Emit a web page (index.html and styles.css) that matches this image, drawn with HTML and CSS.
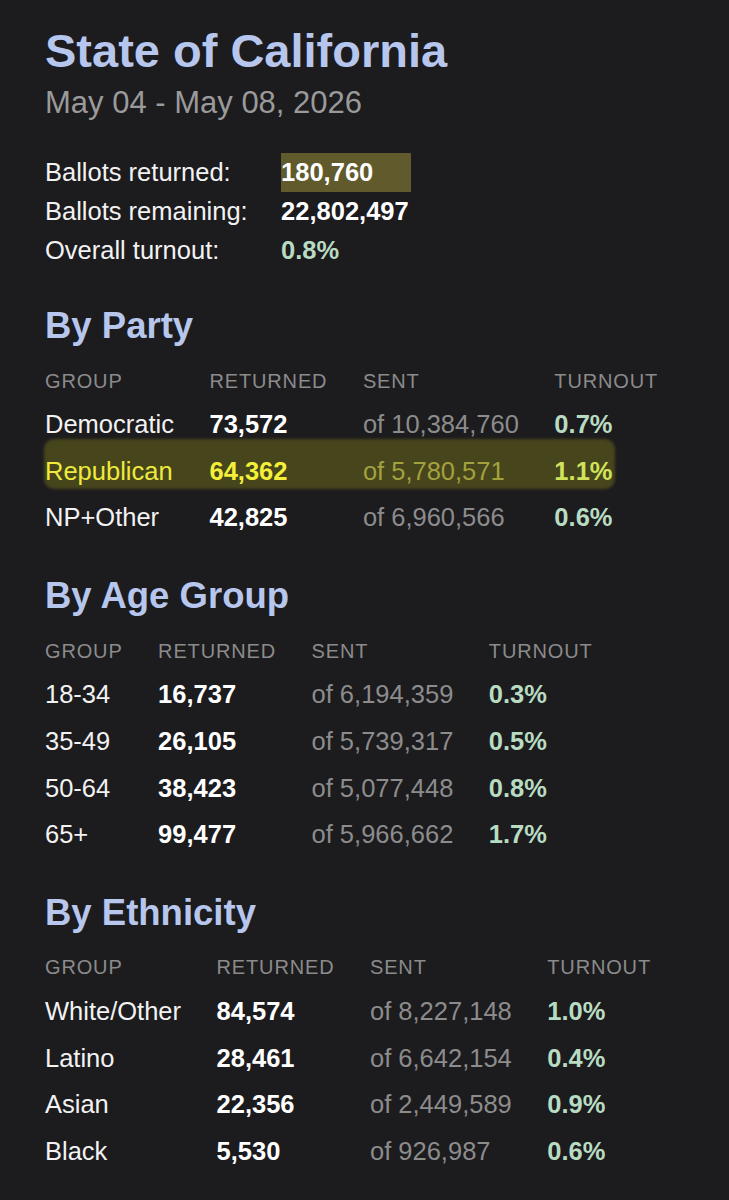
FILE: index.html
```html
<!DOCTYPE html>
<html lang="en">
<head>
<meta charset="utf-8">
<title>State of California</title>
<link rel="stylesheet" href="styles.css">
</head>
<body>
<main class="page">
  <h1 class="title">State of California</h1>
  <p class="dates">May 04 - May 08, 2026</p>

  <dl class="stats">
    <dt>Ballots returned:</dt><dd class="val marked-cell">180,760</dd>
    <dt>Ballots remaining:</dt><dd class="val">22,802,497</dd>
    <dt>Overall turnout:</dt><dd class="val pct">0.8%</dd>
  </dl>

  <section class="group">
    <h2>By Party</h2>
    <div class="tbl">
      <div class="row head"><span>GROUP</span><span>RETURNED</span><span>SENT</span><span>TURNOUT</span></div>
      <div class="row"><span class="name">Democratic</span><span class="num">73,572</span><span class="of">of 10,384,760</span><span class="pct">0.7%</span></div>
      <div class="row marked"><span class="name">Republican</span><span class="num">64,362</span><span class="of">of 5,780,571</span><span class="pct">1.1%</span></div>
      <div class="row"><span class="name">NP+Other</span><span class="num">42,825</span><span class="of">of 6,960,566</span><span class="pct">0.6%</span></div>
    </div>
  </section>

  <section class="group">
    <h2>By Age Group</h2>
    <div class="tbl">
      <div class="row head"><span>GROUP</span><span>RETURNED</span><span>SENT</span><span>TURNOUT</span></div>
      <div class="row"><span class="name">18-34</span><span class="num">16,737</span><span class="of">of 6,194,359</span><span class="pct">0.3%</span></div>
      <div class="row"><span class="name">35-49</span><span class="num">26,105</span><span class="of">of 5,739,317</span><span class="pct">0.5%</span></div>
      <div class="row"><span class="name">50-64</span><span class="num">38,423</span><span class="of">of 5,077,448</span><span class="pct">0.8%</span></div>
      <div class="row"><span class="name">65+</span><span class="num">99,477</span><span class="of">of 5,966,662</span><span class="pct">1.7%</span></div>
    </div>
  </section>

  <section class="group">
    <h2>By Ethnicity</h2>
    <div class="tbl">
      <div class="row head"><span>GROUP</span><span>RETURNED</span><span>SENT</span><span>TURNOUT</span></div>
      <div class="row"><span class="name">White/Other</span><span class="num">84,574</span><span class="of">of 8,227,148</span><span class="pct">1.0%</span></div>
      <div class="row"><span class="name">Latino</span><span class="num">28,461</span><span class="of">of 6,642,154</span><span class="pct">0.4%</span></div>
      <div class="row"><span class="name">Asian</span><span class="num">22,356</span><span class="of">of 2,449,589</span><span class="pct">0.9%</span></div>
      <div class="row"><span class="name">Black</span><span class="num">5,530</span><span class="of">of 926,987</span><span class="pct">0.6%</span></div>
    </div>
  </section>
</main>
</body>
</html>
```

FILE: styles.css
```css
html, body {
  margin: 0;
  padding: 0;
  background: #1c1b1e;
}

body {
  font-family: "Liberation Sans", Arial, Helvetica, sans-serif;
  color: #f2f2f2;
  min-height: 1200px;
}

.page {
  padding: 23px 20px 0 45px;
}

.title {
  margin: 0;
  font-size: 47px;
  line-height: 56px;
  font-weight: 700;
  color: #b6c6ec;
}

.dates {
  margin: 5px 0 0;
  font-size: 31px;
  line-height: 38px;
  color: #9a9a9a;
}

.stats {
  margin: 31px 0 0;
  display: grid;
  grid-template-columns: max-content max-content;
  font-size: 25.5px;
  line-height: 39px;
}

.stats dt {
  padding-right: 33.4px;
  color: #f2f2f2;
}

.stats dd {
  margin: 0;
  padding-right: 2px;
  font-weight: 700;
  color: #ffffff;
}

.stats dd.pct {
  color: #b8dcc2;
}

.stats dd.marked-cell {
  background: #605a2c;
}

.group {
  margin-top: 34px;
}

.group + .group {
  margin-top: 33px;
}

.group h2 {
  margin: 0 0 17.5px;
  font-size: 36.5px;
  line-height: 44px;
  font-weight: 700;
  color: #b6c6ec;
}

.tbl {
  display: grid;
  grid-template-columns: repeat(4, max-content);
  font-size: 25.5px;
  line-height: 46.7px;
}

.row {
  display: grid;
  grid-column: 1 / -1;
  grid-template-columns: subgrid;
}

.row > span {
  padding-right: 35.5px;
  position: relative;
  z-index: 1;
}

.row.head {
  font-size: 20px;
  line-height: 30px;
  letter-spacing: 0.85px;
  color: #8b8b8b;
  margin-bottom: 5.5px;
}

.name {
  color: #f2f2f2;
}

.num {
  font-weight: 700;
  color: #ffffff;
}

.of {
  color: #8c8c8c;
}

.pct {
  font-weight: 700;
  color: #b8dcc2;
}

/* marker annotation over the Republican row */
.row.marked {
  position: relative;
}

.row.marked::before {
  content: "";
  position: absolute;
  left: -1px;
  top: -9px;
  width: 571px;
  height: 50px;
  border-radius: 10px;
  background: #47451c;
  filter: blur(1.5px);
  z-index: 0;
}

.row.marked .name { color: #eeea3e; }
.row.marked .num { color: #f4f03a; }
.row.marked .of { color: #a3a13e; }
.row.marked .pct { color: #d0e35a; }
```
